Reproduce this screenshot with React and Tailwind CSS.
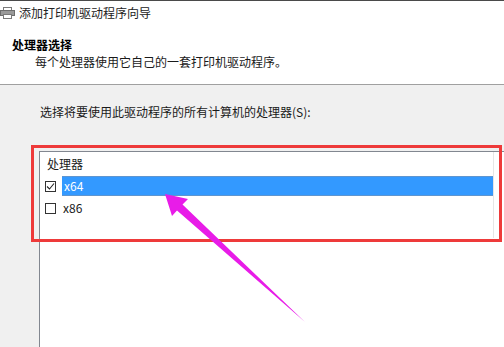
import React from 'react';

const font = { fontFamily: '"Microsoft YaHei", "Noto Sans CJK SC", "Noto Sans", sans-serif' };

const PrinterIcon = () => (
  <svg width="15" height="12" viewBox="0 0 15 12">
    <rect x="3.5" y="0.5" width="8" height="3" fill="#fff" stroke="#7a7a7a" />
    <rect x="0.5" y="3.5" width="14" height="5" fill="#9a9a9a" stroke="#6e6e6e" />
    <rect x="3.5" y="7.5" width="8" height="4" fill="#fff" stroke="#7a7a7a" />
  </svg>
);

const Checkbox = ({ checked }) => (
  <div className="w-[11px] h-[11px] border border-[#333] bg-white flex items-center justify-center shrink-0">
    {checked && (
      <svg width="9" height="9" viewBox="0 0 9 9">
        <path d="M1 4.5 L3.5 7 L8 1.5" fill="none" stroke="#222" strokeWidth="1.1" />
      </svg>
    )}
  </div>
);

export default function App() {
  return (
    <div className="w-[504px] h-[347px] overflow-hidden relative bg-[#f0f0f0] flex flex-col text-[12px] text-[#1a1a1a]" style={font}>
      <div className="h-px bg-[#4a4a4a]" />

      {/* header */}
      <div className="h-[84px] bg-white border-b border-[#a0a0a0] shrink-0">
        <div className="h-[23px] flex items-center">
          <PrinterIcon />
          <span className="ml-[4px] leading-[16px] text-[#222]">添加打印机驱动程序向导</span>
        </div>
        <div className="pl-[12px] mt-[13px] leading-[16px] font-bold text-black">处理器选择</div>
        <div className="pl-[35px] mt-px leading-[16px]">每个处理器使用它自己的一套打印机驱动程序。</div>
      </div>

      {/* body */}
      <div className="flex-1 flex flex-col min-h-0">
        <div className="pl-[40px] pt-[19px] leading-[16px]">选择将要使用此驱动程序的所有计算机的处理器(S):</div>
        <div className="ml-[39px] mt-[31px] flex-1 bg-white border-l border-t border-[#828790]">
          <div className="w-[454px] border-r border-[#e6e6e6] pb-[20px]">
            <div className="h-[24px] flex items-center pl-[7px]">处理器</div>
            <div className="h-[20px] flex items-center">
              <div className="ml-[5px]"><Checkbox checked /></div>
              <div className="ml-[6px] flex-1 h-full bg-[#3399ff] border-y border-[#5f95cf] flex items-center pl-[2px] text-white">x64</div>
            </div>
            <div className="h-[20px] mt-[2px] flex items-center">
              <div className="ml-[5px]"><Checkbox /></div>
              <div className="ml-[7px]">x86</div>
            </div>
          </div>
        </div>
      </div>

      {/* annotation box */}
      <div className="absolute left-[31px] top-[145px] w-[471px] h-[97px] border-[3px] border-[#ee3a3a]" />

      {/* annotation arrow */}
      <svg className="absolute left-0 top-0" width="504" height="347" viewBox="0 0 504 347">
        <polygon
          points="165,194 188,199 182.5,204.5 305,322 177,210.5 172,216"
          fill="#e81ce8"
        />
      </svg>
    </div>
  );
}
